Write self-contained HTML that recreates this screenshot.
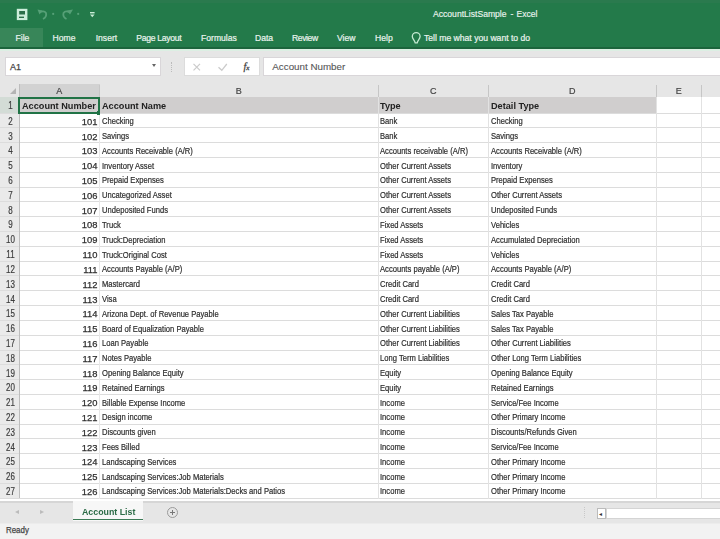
<!DOCTYPE html><html><head><meta charset="utf-8"><style>
*{margin:0;padding:0;box-sizing:border-box}
html,body{width:720px;height:539px;overflow:hidden;background:#fff;font-family:"Liberation Sans",sans-serif}
.a{position:absolute;white-space:nowrap}
.tb{left:0;top:0;width:720px;height:48.5px;background:#237a4a}
.tt{color:#eaf4ee;font-size:8.6px;-webkit-text-stroke:0.15px #eaf4ee}
.tab{color:#eaf4ee;font-size:8.6px;top:33px;-webkit-text-stroke:0.2px #eaf4ee}
.hdr{background:#e6e6e6}
.ch{color:#444;font-size:9px;text-align:center;-webkit-text-stroke:0.2px #444}
.rh{color:#3a3a3a;font-size:10px;text-align:center;-webkit-text-stroke:0.2px #444;transform:scaleX(0.8)}
.d{font-size:8.6px;color:#2a2a2a;-webkit-text-stroke:0.2px #333;transform:scaleX(0.885);transform-origin:0 0}
.n{font-size:9.4px;color:#2a2a2a;text-align:right;-webkit-text-stroke:0.25px #333}
.b{font-size:9.8px;font-weight:bold;color:#222;transform:scaleX(0.935);transform-origin:0 0}
.gh{background:#dcdcdc;height:1px}
.gv{background:#e2e2e2;width:1px}
</style></head><body><div id="w" style="position:absolute;left:0;top:0;width:720px;height:539px;overflow:hidden;filter:blur(0.6px)">
<div class="a tb"></div>
<div class="a" style="left:0;top:0;width:720px;height:3px;background:#2a7a4e"></div>
<div class="a" style="left:0;top:27.6px;width:42.7px;height:19.4px;background:#388659"></div>
<svg class="a" style="left:0;top:0" width="40" height="28"><rect x="16.8" y="8.8" width="10.6" height="11.3" fill="#cdeedb"/><rect x="19.2" y="11" width="5.8" height="3.5" fill="#2a6e48"/><rect x="19" y="16.6" width="5" height="1.4" fill="#2a6e48"/></svg>
<svg class="a" style="left:0;top:0" width="100" height="26"><path d="M39.5 12.5Q44 10 46 13Q47 17 43 19" fill="none" stroke="#56a077" stroke-width="1.8"/><path d="M37.5 9.5L39.5 14.5L42.5 10.5z" fill="#56a077"/><circle cx="53.2" cy="13.9" r="1.1" fill="#56a077"/><path d="M70 12.5Q65.5 10 63.5 13Q62.5 17 66.5 19" fill="none" stroke="#56a077" stroke-width="1.8"/><path d="M73 9.5L70 14.5L67 10.5z" fill="#56a077"/><circle cx="78.2" cy="13.9" r="1.1" fill="#56a077"/><rect x="90" y="12" width="4.6" height="1.4" fill="#c8ecd6"/><path d="M90 14.6h4.6l-2.3 2.6z" fill="#c8ecd6"/></svg>
<div class="a tt" style="left:433px;top:8.7px">AccountListSample<span style="margin:0 3px 0 4px">-</span>Excel</div>
<div class="a tab" style="left:15.5px;letter-spacing:0px">File</div>
<div class="a tab" style="left:52.5px;letter-spacing:0px">Home</div>
<div class="a tab" style="left:95.7px;letter-spacing:0px">Insert</div>
<div class="a tab" style="left:136.3px;letter-spacing:-0.28px">Page Layout</div>
<div class="a tab" style="left:201px;letter-spacing:0px">Formulas</div>
<div class="a tab" style="left:255px;letter-spacing:0px">Data</div>
<div class="a tab" style="left:292px;letter-spacing:-0.4px">Review</div>
<div class="a tab" style="left:337px;letter-spacing:0px">View</div>
<div class="a tab" style="left:375px;letter-spacing:0px">Help</div>
<svg class="a" style="left:0;top:0" width="440" height="48"><path d="M416.2 32.6a3.9 3.9 0 0 1 3.9 3.9c0 2.4-2.3 3.9-2.9 6.3h-2c-0.6-2.4-2.9-3.9-2.9-6.3a3.9 3.9 0 0 1 3.9-3.9z" fill="none" stroke="#c4ead2" stroke-width="1.3"/></svg>
<div class="a tab" style="left:424px">Tell me what you want to do</div>
<div class="a" style="left:0;top:47px;width:720px;height:1.5px;background:#1c643c"></div>
<div class="a" style="left:0;top:48.5px;width:720px;height:2.5px;background:#dcefe3"></div>
<div class="a" style="left:0;top:51px;width:720px;height:34px;background:#e6e6e6"></div>
<div class="a" style="left:5px;top:57px;width:156px;height:19px;background:#fff;border:1px solid #d9d6d9"></div>
<div class="a" style="left:10px;top:62px;font-size:9px;color:#444;-webkit-text-stroke:0.25px #444">A1</div>
<div class="a" style="left:152px;top:64px;width:0;height:0;border-left:2.5px solid transparent;border-right:2.5px solid transparent;border-top:3px solid #666"></div>
<div class="a" style="left:171px;top:62px;width:1px;height:10px;border-left:1px dotted #bbb"></div>
<div class="a" style="left:184px;top:57px;width:76px;height:19px;background:#fff;border:1px solid #dcdcdc"></div>
<svg class="a" style="left:0;top:0" width="720" height="90"><path d="M193.5 63.8L200 70.3M200 63.8L193.5 70.3" stroke="#cbcbcb" stroke-width="1.2" fill="none"/><path d="M218.5 67.2L221.8 70.3L226.8 64" stroke="#cbcbcb" stroke-width="1.3" fill="none"/></svg>
<div class="a" style="left:243.5px;top:60.5px;font-size:10px;color:#444;-webkit-text-stroke:0.3px #444;font-family:'Liberation Serif',serif;font-style:italic">f<span style="font-size:7px">x</span></div>
<div class="a" style="left:263px;top:56.5px;width:459px;height:19px;background:#fff;border:1px solid #d9d6d9"></div>
<div class="a" style="left:272.3px;top:61.2px;font-size:9.8px;color:#555;-webkit-text-stroke:0.1px #555">Account Number</div>
<div class="a hdr" style="left:0;top:84px;width:720px;height:12.5px"></div>
<div class="a" style="left:0;top:96.5px;width:19px;height:402px;background:#eaeaea"></div>
<div class="a" style="left:19px;top:84px;width:81px;height:12.5px;background:#d2d2d2"></div>
<div class="a" style="left:0;top:96.5px;width:19px;height:16.7px;background:#d3dcd6"></div>
<div class="a" style="left:10px;top:88px;width:0;height:0;border-left:6.5px solid transparent;border-bottom:6.5px solid #b4b4b4"></div>
<div class="a ch" style="left:19px;top:85.9px;width:80.7px">A</div>
<div class="a" style="left:99.2px;top:85px;width:1px;height:11.5px;background:#c6c6c6"></div>
<div class="a ch" style="left:99.7px;top:85.9px;width:278.3px">B</div>
<div class="a" style="left:377.5px;top:85px;width:1px;height:11.5px;background:#c6c6c6"></div>
<div class="a ch" style="left:378px;top:85.9px;width:110.5px">C</div>
<div class="a" style="left:488.0px;top:85px;width:1px;height:11.5px;background:#c6c6c6"></div>
<div class="a ch" style="left:488.5px;top:85.9px;width:167.5px">D</div>
<div class="a" style="left:655.5px;top:85px;width:1px;height:11.5px;background:#c6c6c6"></div>
<div class="a ch" style="left:656px;top:85.9px;width:45.5px">E</div>
<div class="a" style="left:701.0px;top:85px;width:1px;height:11.5px;background:#c6c6c6"></div>
<div class="a ch" style="left:701.5px;top:85.9px;width:58.5px">F</div>
<div class="a" style="left:759.5px;top:85px;width:1px;height:11.5px;background:#c6c6c6"></div>
<div class="a" style="left:19px;top:96.5px;width:637px;height:16.599999999999994px;background:#d0cece"></div>
<div class="a gh" style="left:0;top:112.60px;width:720px"></div>
<div class="a gh" style="left:0;top:127.41px;width:720px"></div>
<div class="a gh" style="left:0;top:142.22px;width:720px"></div>
<div class="a gh" style="left:0;top:157.02px;width:720px"></div>
<div class="a gh" style="left:0;top:171.83px;width:720px"></div>
<div class="a gh" style="left:0;top:186.64px;width:720px"></div>
<div class="a gh" style="left:0;top:201.45px;width:720px"></div>
<div class="a gh" style="left:0;top:216.25px;width:720px"></div>
<div class="a gh" style="left:0;top:231.06px;width:720px"></div>
<div class="a gh" style="left:0;top:245.87px;width:720px"></div>
<div class="a gh" style="left:0;top:260.68px;width:720px"></div>
<div class="a gh" style="left:0;top:275.48px;width:720px"></div>
<div class="a gh" style="left:0;top:290.29px;width:720px"></div>
<div class="a gh" style="left:0;top:305.10px;width:720px"></div>
<div class="a gh" style="left:0;top:319.91px;width:720px"></div>
<div class="a gh" style="left:0;top:334.72px;width:720px"></div>
<div class="a gh" style="left:0;top:349.52px;width:720px"></div>
<div class="a gh" style="left:0;top:364.33px;width:720px"></div>
<div class="a gh" style="left:0;top:379.14px;width:720px"></div>
<div class="a gh" style="left:0;top:393.95px;width:720px"></div>
<div class="a gh" style="left:0;top:408.75px;width:720px"></div>
<div class="a gh" style="left:0;top:423.56px;width:720px"></div>
<div class="a gh" style="left:0;top:438.37px;width:720px"></div>
<div class="a gh" style="left:0;top:453.18px;width:720px"></div>
<div class="a gh" style="left:0;top:467.98px;width:720px"></div>
<div class="a gh" style="left:0;top:482.79px;width:720px"></div>
<div class="a gh" style="left:0;top:497.60px;width:720px"></div>
<div class="a gv" style="left:99.2px;top:96.5px;height:402px;background:#e8e8e8"></div>
<div class="a gv" style="left:377.5px;top:96.5px;height:402px"></div>
<div class="a gv" style="left:488.0px;top:96.5px;height:402px"></div>
<div class="a gv" style="left:655.5px;top:96.5px;height:402px"></div>
<div class="a gv" style="left:701.0px;top:96.5px;height:402px"></div>
<div class="a gv" style="left:759.5px;top:96.5px;height:402px"></div>
<div class="a" style="left:18.5px;top:84px;width:1px;height:414px;background:#bdbdbd"></div>
<div class="a rh" style="left:0.7px;top:100.10px;width:19px">1</div>
<div class="a rh" style="left:0.7px;top:115.80px;width:19px">2</div>
<div class="a rh" style="left:0.7px;top:130.61px;width:19px">3</div>
<div class="a rh" style="left:0.7px;top:145.42px;width:19px">4</div>
<div class="a rh" style="left:0.7px;top:160.23px;width:19px">5</div>
<div class="a rh" style="left:0.7px;top:175.03px;width:19px">6</div>
<div class="a rh" style="left:0.7px;top:189.84px;width:19px">7</div>
<div class="a rh" style="left:0.7px;top:204.65px;width:19px">8</div>
<div class="a rh" style="left:0.7px;top:219.46px;width:19px">9</div>
<div class="a rh" style="left:0.7px;top:234.27px;width:19px">10</div>
<div class="a rh" style="left:0.7px;top:249.07px;width:19px">11</div>
<div class="a rh" style="left:0.7px;top:263.88px;width:19px">12</div>
<div class="a rh" style="left:0.7px;top:278.69px;width:19px">13</div>
<div class="a rh" style="left:0.7px;top:293.50px;width:19px">14</div>
<div class="a rh" style="left:0.7px;top:308.30px;width:19px">15</div>
<div class="a rh" style="left:0.7px;top:323.11px;width:19px">16</div>
<div class="a rh" style="left:0.7px;top:337.92px;width:19px">17</div>
<div class="a rh" style="left:0.7px;top:352.73px;width:19px">18</div>
<div class="a rh" style="left:0.7px;top:367.53px;width:19px">19</div>
<div class="a rh" style="left:0.7px;top:382.34px;width:19px">20</div>
<div class="a rh" style="left:0.7px;top:397.15px;width:19px">21</div>
<div class="a rh" style="left:0.7px;top:411.96px;width:19px">22</div>
<div class="a rh" style="left:0.7px;top:426.77px;width:19px">23</div>
<div class="a rh" style="left:0.7px;top:441.57px;width:19px">24</div>
<div class="a rh" style="left:0.7px;top:456.38px;width:19px">25</div>
<div class="a rh" style="left:0.7px;top:471.19px;width:19px">26</div>
<div class="a rh" style="left:0.7px;top:486.00px;width:19px">27</div>
<div class="a b" style="left:21.5px;top:100.3px">Account Number</div>
<div class="a b" style="left:102px;top:100.3px">Account Name</div>
<div class="a b" style="left:379.7px;top:100.3px">Type</div>
<div class="a b" style="left:490.6px;top:100.3px">Detail Type</div>
<div class="a" style="left:18px;top:96.5px;width:81.5px;height:17px;border:2px solid #217346"></div>
<div class="a" style="left:96.8px;top:111.2px;width:3.6px;height:3.6px;background:#217346"></div>
<div class="a n" style="right:622.5px;top:115.80px">101</div>
<div class="a d" style="left:102px;top:116.25px">Checking</div>
<div class="a d" style="left:380px;top:116.25px">Bank</div>
<div class="a d" style="left:491px;top:116.25px">Checking</div>
<div class="a n" style="right:622.5px;top:130.61px">102</div>
<div class="a d" style="left:102px;top:131.06px">Savings</div>
<div class="a d" style="left:380px;top:131.06px">Bank</div>
<div class="a d" style="left:491px;top:131.06px">Savings</div>
<div class="a n" style="right:622.5px;top:145.42px">103</div>
<div class="a d" style="left:102px;top:145.87px">Accounts Receivable (A/R)</div>
<div class="a d" style="left:380px;top:145.87px">Accounts receivable (A/R)</div>
<div class="a d" style="left:491px;top:145.87px">Accounts Receivable (A/R)</div>
<div class="a n" style="right:622.5px;top:160.23px">104</div>
<div class="a d" style="left:102px;top:160.68px">Inventory Asset</div>
<div class="a d" style="left:380px;top:160.68px">Other Current Assets</div>
<div class="a d" style="left:491px;top:160.68px">Inventory</div>
<div class="a n" style="right:622.5px;top:175.03px">105</div>
<div class="a d" style="left:102px;top:175.48px">Prepaid Expenses</div>
<div class="a d" style="left:380px;top:175.48px">Other Current Assets</div>
<div class="a d" style="left:491px;top:175.48px">Prepaid Expenses</div>
<div class="a n" style="right:622.5px;top:189.84px">106</div>
<div class="a d" style="left:102px;top:190.29px">Uncategorized Asset</div>
<div class="a d" style="left:380px;top:190.29px">Other Current Assets</div>
<div class="a d" style="left:491px;top:190.29px">Other Current Assets</div>
<div class="a n" style="right:622.5px;top:204.65px">107</div>
<div class="a d" style="left:102px;top:205.10px">Undeposited Funds</div>
<div class="a d" style="left:380px;top:205.10px">Other Current Assets</div>
<div class="a d" style="left:491px;top:205.10px">Undeposited Funds</div>
<div class="a n" style="right:622.5px;top:219.46px">108</div>
<div class="a d" style="left:102px;top:219.91px">Truck</div>
<div class="a d" style="left:380px;top:219.91px">Fixed Assets</div>
<div class="a d" style="left:491px;top:219.91px">Vehicles</div>
<div class="a n" style="right:622.5px;top:234.27px">109</div>
<div class="a d" style="left:102px;top:234.72px">Truck:Depreciation</div>
<div class="a d" style="left:380px;top:234.72px">Fixed Assets</div>
<div class="a d" style="left:491px;top:234.72px">Accumulated Depreciation</div>
<div class="a n" style="right:622.5px;top:249.07px">110</div>
<div class="a d" style="left:102px;top:249.52px">Truck:Original Cost</div>
<div class="a d" style="left:380px;top:249.52px">Fixed Assets</div>
<div class="a d" style="left:491px;top:249.52px">Vehicles</div>
<div class="a n" style="right:622.5px;top:263.88px">111</div>
<div class="a d" style="left:102px;top:264.33px">Accounts Payable (A/P)</div>
<div class="a d" style="left:380px;top:264.33px">Accounts payable (A/P)</div>
<div class="a d" style="left:491px;top:264.33px">Accounts Payable (A/P)</div>
<div class="a n" style="right:622.5px;top:278.69px">112</div>
<div class="a d" style="left:102px;top:279.14px">Mastercard</div>
<div class="a d" style="left:380px;top:279.14px">Credit Card</div>
<div class="a d" style="left:491px;top:279.14px">Credit Card</div>
<div class="a n" style="right:622.5px;top:293.50px">113</div>
<div class="a d" style="left:102px;top:293.95px">Visa</div>
<div class="a d" style="left:380px;top:293.95px">Credit Card</div>
<div class="a d" style="left:491px;top:293.95px">Credit Card</div>
<div class="a n" style="right:622.5px;top:308.30px">114</div>
<div class="a d" style="left:102px;top:308.75px">Arizona Dept. of Revenue Payable</div>
<div class="a d" style="left:380px;top:308.75px">Other Current Liabilities</div>
<div class="a d" style="left:491px;top:308.75px">Sales Tax Payable</div>
<div class="a n" style="right:622.5px;top:323.11px">115</div>
<div class="a d" style="left:102px;top:323.56px">Board of Equalization Payable</div>
<div class="a d" style="left:380px;top:323.56px">Other Current Liabilities</div>
<div class="a d" style="left:491px;top:323.56px">Sales Tax Payable</div>
<div class="a n" style="right:622.5px;top:337.92px">116</div>
<div class="a d" style="left:102px;top:338.37px">Loan Payable</div>
<div class="a d" style="left:380px;top:338.37px">Other Current Liabilities</div>
<div class="a d" style="left:491px;top:338.37px">Other Current Liabilities</div>
<div class="a n" style="right:622.5px;top:352.73px">117</div>
<div class="a d" style="left:102px;top:353.18px">Notes Payable</div>
<div class="a d" style="left:380px;top:353.18px">Long Term Liabilities</div>
<div class="a d" style="left:491px;top:353.18px">Other Long Term Liabilities</div>
<div class="a n" style="right:622.5px;top:367.53px">118</div>
<div class="a d" style="left:102px;top:367.98px">Opening Balance Equity</div>
<div class="a d" style="left:380px;top:367.98px">Equity</div>
<div class="a d" style="left:491px;top:367.98px">Opening Balance Equity</div>
<div class="a n" style="right:622.5px;top:382.34px">119</div>
<div class="a d" style="left:102px;top:382.79px">Retained Earnings</div>
<div class="a d" style="left:380px;top:382.79px">Equity</div>
<div class="a d" style="left:491px;top:382.79px">Retained Earnings</div>
<div class="a n" style="right:622.5px;top:397.15px">120</div>
<div class="a d" style="left:102px;top:397.60px">Billable Expense Income</div>
<div class="a d" style="left:380px;top:397.60px">Income</div>
<div class="a d" style="left:491px;top:397.60px">Service/Fee Income</div>
<div class="a n" style="right:622.5px;top:411.96px">121</div>
<div class="a d" style="left:102px;top:412.41px">Design income</div>
<div class="a d" style="left:380px;top:412.41px">Income</div>
<div class="a d" style="left:491px;top:412.41px">Other Primary Income</div>
<div class="a n" style="right:622.5px;top:426.77px">122</div>
<div class="a d" style="left:102px;top:427.22px">Discounts given</div>
<div class="a d" style="left:380px;top:427.22px">Income</div>
<div class="a d" style="left:491px;top:427.22px">Discounts/Refunds Given</div>
<div class="a n" style="right:622.5px;top:441.57px">123</div>
<div class="a d" style="left:102px;top:442.02px">Fees Billed</div>
<div class="a d" style="left:380px;top:442.02px">Income</div>
<div class="a d" style="left:491px;top:442.02px">Service/Fee Income</div>
<div class="a n" style="right:622.5px;top:456.38px">124</div>
<div class="a d" style="left:102px;top:456.83px">Landscaping Services</div>
<div class="a d" style="left:380px;top:456.83px">Income</div>
<div class="a d" style="left:491px;top:456.83px">Other Primary Income</div>
<div class="a n" style="right:622.5px;top:471.19px">125</div>
<div class="a d" style="left:102px;top:471.64px">Landscaping Services:Job Materials</div>
<div class="a d" style="left:380px;top:471.64px">Income</div>
<div class="a d" style="left:491px;top:471.64px">Other Primary Income</div>
<div class="a n" style="right:622.5px;top:486.00px">126</div>
<div class="a d" style="left:102px;top:486.45px">Landscaping Services:Job Materials:Decks and Patios</div>
<div class="a d" style="left:380px;top:486.45px">Income</div>
<div class="a d" style="left:491px;top:486.45px">Other Primary Income</div>
<div class="a" style="left:0;top:500.5px;width:720px;height:22.5px;background:#e6e6e6;border-top:2px solid #d6d6d6"></div>
<div class="a" style="left:15px;top:507px;font-size:8px;color:#bbb">&#x25C2;</div>
<div class="a" style="left:40px;top:507px;font-size:8px;color:#bbb">&#x25B8;</div>
<div class="a" style="left:73px;top:501px;width:70px;height:19.5px;background:#f7f7f7"></div>
<div class="a" style="left:73px;top:518.8px;width:70px;height:1.6px;background:#3b7a55"></div>
<div class="a" style="left:81.5px;top:506.2px;font-size:9.8px;font-weight:bold;color:#2b6b46;transform:scaleX(0.9);transform-origin:0 0">Account List</div>
<div class="a" style="left:167px;top:506.5px;width:11px;height:11px;border:1px solid #999;border-radius:50%"></div>
<div class="a" style="left:170px;top:511.5px;width:5px;height:1px;background:#777"></div>
<div class="a" style="left:172px;top:509.5px;width:1px;height:5px;background:#777"></div>
<div class="a" style="left:596.5px;top:508px;width:9px;height:10.5px;background:#fff;border:1px solid #bbb"></div>
<div class="a" style="left:598.5px;top:510px;font-size:6px;color:#333">&#x25C2;</div>
<div class="a" style="left:605.5px;top:508px;width:120px;height:10.5px;background:#fff;border:1px solid #d4d4d4"></div>
<div class="a" style="left:0;top:523px;width:720px;height:16px;background:#f2f2f2;border-top:1px solid #ececec"></div>
<div class="a" style="left:584px;top:507px;width:1px;height:11px;border-left:1px dotted #c8c8c8"></div>
<div class="a" style="left:6.2px;top:525.1px;font-size:9px;color:#444;-webkit-text-stroke:0.25px #444;transform:scaleX(0.88);transform-origin:0 0">Ready</div>
</div></body></html>
